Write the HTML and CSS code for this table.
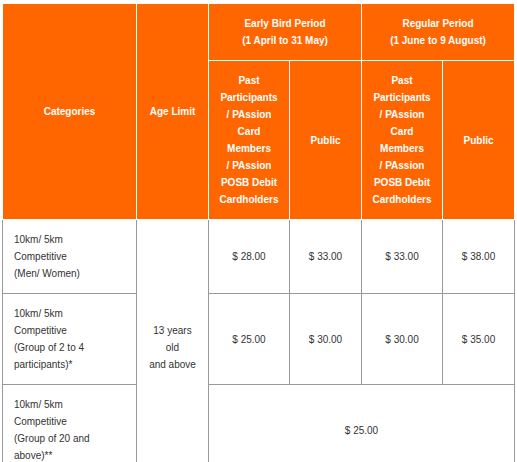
FILE: index.html
```html
<!DOCTYPE html>
<html>
<head>
<meta charset="utf-8">
<link rel="stylesheet" href="styles.css">
</head>
<body>
<table class="fees">
  <colgroup>
    <col class="c-cat">
    <col class="c-age">
    <col class="c-past">
    <col class="c-pub">
    <col class="c-past">
    <col class="c-pub">
  </colgroup>
  <thead>
    <tr>
      <th rowspan="2">Categories</th>
      <th rowspan="2">Age Limit</th>
      <th colspan="2">Early Bird Period<br>(1 April to 31 May)</th>
      <th colspan="2">Regular Period<br>(1 June to 9 August)</th>
    </tr>
    <tr>
      <th>Past<br>Participants<br>/ PAssion<br>Card<br>Members<br>/ PAssion<br>POSB Debit<br>Cardholders</th>
      <th>Public</th>
      <th>Past<br>Participants<br>/ PAssion<br>Card<br>Members<br>/ PAssion<br>POSB Debit<br>Cardholders</th>
      <th>Public</th>
    </tr>
  </thead>
  <tbody>
    <tr class="r3">
      <td class="cat">10km/ 5km<br>Competitive<br>(Men/ Women)</td>
      <td rowspan="3">13 years<br>old<br>and above</td>
      <td>$ 28.00</td>
      <td>$ 33.00</td>
      <td>$ 33.00</td>
      <td>$ 38.00</td>
    </tr>
    <tr>
      <td class="cat">10km/ 5km<br>Competitive<br>(Group of 2 to 4<br>participants)*</td>
      <td>$ 25.00</td>
      <td>$ 30.00</td>
      <td>$ 30.00</td>
      <td>$ 35.00</td>
    </tr>
    <tr>
      <td class="cat">10km/ 5km<br>Competitive<br>(Group of 20 and<br>above)**</td>
      <td colspan="4">$ 25.00</td>
    </tr>
  </tbody>
</table>
</body>
</html>
```

FILE: styles.css
```css
html, body {
  margin: 0;
  padding: 0;
  background: #ffffff;
}

body {
  padding: 3px 0 0 2px;
}

.fees {
  border-collapse: collapse;
  table-layout: fixed;
  width: 513px;
  font-family: "Liberation Sans", Arial, Helvetica, sans-serif;
  font-size: 10px;
  line-height: 17px;
}

.c-cat { width: 134px; }
.c-age { width: 72px; }
.c-past { width: 81px; }
.c-pub { width: 72px; }

.fees th {
  background: #ff6600;
  color: #ffffff;
  font-weight: bold;
  border: 1px solid #ffffff;
  padding: 11px 10px;
  text-align: center;
  vertical-align: middle;
}

.fees td {
  color: #333333;
  border: 1px solid #999999;
  padding: 11px 10px;
  text-align: center;
  vertical-align: middle;
}

.fees td.cat {
  text-align: left;
  padding-left: 11px;
}
```
